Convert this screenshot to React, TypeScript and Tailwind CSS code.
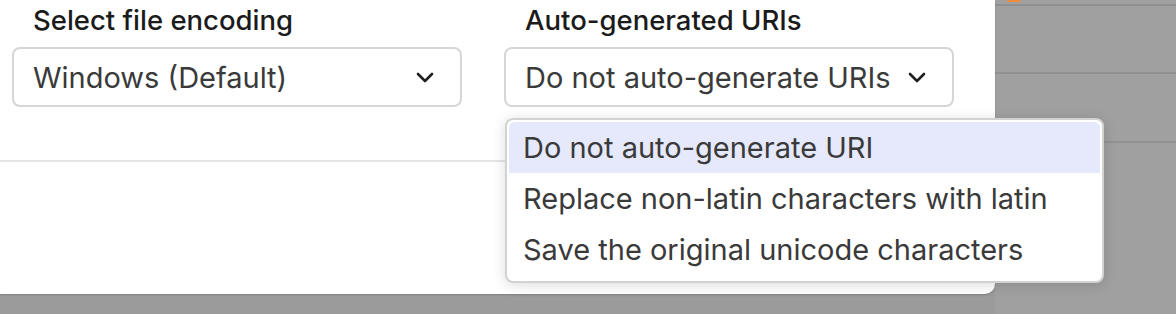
const options = [
  'Do not auto-generate URI',
  'Replace non-latin characters with latin',
  'Save the original unicode characters',
]

function Chevron() {
  return (
    <svg width="18" height="11" viewBox="0 0 18 11" fill="none" className="text-[#1f1f1f]">
      <path d="M2 2l7 7 7-7" stroke="currentColor" strokeWidth="2.6" strokeLinecap="round" strokeLinejoin="round" />
    </svg>
  )
}

function Select({ label, value, open }: { label: string; value: string; open?: boolean }) {
  return (
    <div className="relative w-[450px]">
      <p className="text-[27.5px] font-medium text-[#1b1b1b] leading-[32px] pl-[21px] pt-[4px]">{label}</p>
      <button className="mt-[11px] w-full h-[60px] flex items-center justify-between pl-[19px] pr-[26px] rounded-[8px] border-2 border-[#d6d6d6] bg-white text-left">
        <span className="text-[29px] text-[#3a3a3a] leading-none">{value}</span>
        <Chevron />
      </button>
      {open && (
        <div className="absolute left-[1px] top-[118px] w-[599px] rounded-[8px] border-2 border-[#d2d2d2] bg-white p-[2px] shadow-[0_2px_14px_rgba(0,0,0,0.14)] z-10">
          {options.map((o, i) => (
            <div
              key={o}
              className={`h-[51px] flex items-center pl-[14px] text-[29px] text-[#3a3a3a] rounded-t-[6px] ${i === 0 ? 'bg-[#e5e9fb]' : ''}`}
            >
              {o}
            </div>
          ))}
          <div className="h-[4px]" />
        </div>
      )}
    </div>
  )
}

export default function App() {
  return (
    <div className="h-[314px] w-[1176px] flex bg-[#9b9b9b] overflow-hidden" style={{ fontFamily: 'Inter, "Noto Sans", sans-serif' }}>
      <div className="w-[995px] h-[294px] bg-white rounded-br-[10px] shadow-[0_1px_2px_rgba(0,0,0,0.18)] flex flex-col relative z-[1]">
        <div className="flex gap-[42px] pl-[12px]">
          <Select label="Select file encoding" value="Windows (Default)" />
          <Select label="Auto-generated URIs" value="Do not auto-generate URIs" open />
        </div>
        <div className="mt-[53px] h-[2px] bg-[#e6e6e6]" />
      </div>
      <div className="flex-1 bg-[#a0a0a0]">
        <div className="h-[4px] relative">
          <span className="absolute left-[12px] top-[-3px] w-[14px] h-[5px] rounded-full bg-[#f08a3c]" />
        </div>
        <div className="h-[2px] bg-[#8f8f8f]" />
        <div className="h-[66px]" />
        <div className="h-[2px] bg-[#8f8f8f]" />
        <div className="h-[67px]" />
        <div className="h-[2px] bg-[#929292]" />
      </div>
    </div>
  )
}
